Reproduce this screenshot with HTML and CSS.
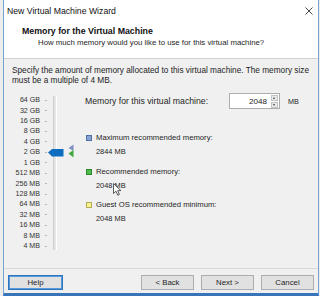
FILE: index.html
```html
<!DOCTYPE html>
<html lang="en">
<head>
    <meta charset="UTF-8">
    <title>New Virtual Machine Wizard</title>
    <link rel="stylesheet" href="styles.css">
</head>
<body>
    <div class="window">
        <!-- 标题栏 -->
        <div class="titlebar">
            <span class="title-text">New Virtual Machine Wizard</span>
            <svg class="close" width="8" height="8" viewBox="0 0 8 8">
                <path d="M0.5 0.5 L7.5 7.5 M7.5 0.5 L0.5 7.5" stroke="#333" stroke-width="0.9" fill="none"/>
            </svg>
        </div>

        <!-- 页眉 -->
        <div class="header">
            <div class="header-title">Memory for the Virtual Machine</div>
            <div class="header-sub">How much memory would you like to use for this virtual machine?</div>
        </div>

        <!-- 主体 -->
        <div class="body">
            <p class="desc">Specify the amount of memory allocated to this virtual machine. The memory size<br>must be a multiple of 4 MB.</p>

            <div class="main">
                <!-- 刻度和滑块 -->
                <div class="scale">
                    <ul class="labels">
                        <li><span>64 GB</span><i></i></li>
                        <li><span>32 GB</span><i></i></li>
                        <li><span>16 GB</span><i></i></li>
                        <li><span>8 GB</span><i></i></li>
                        <li><span>4 GB</span><i></i></li>
                        <li><span>2 GB</span><i></i></li>
                        <li><span>1 GB</span><i></i></li>
                        <li><span>512 MB</span><i></i></li>
                        <li><span>256 MB</span><i></i></li>
                        <li><span>128 MB</span><i></i></li>
                        <li><span>64 MB</span><i></i></li>
                        <li><span>32 MB</span><i></i></li>
                        <li><span>16 MB</span><i></i></li>
                        <li><span>8 MB</span><i></i></li>
                        <li><span>4 MB</span><i></i></li>
                    </ul>
                    <div class="track"></div>
                    <svg class="thumb" width="16" height="8" viewBox="0 0 16 8">
                        <path d="M0 3.5 L4 0 L15.5 0 L15.5 7.5 L4 7.5 Z" fill="#0f6dc0"/>
                    </svg>
                    <svg class="marks" width="7" height="14" viewBox="0 0 7 14">
                        <path d="M0.5 4 L5.5 0.5 L5.5 7 Z" fill="#7f8fbf"/>
                        <path d="M0.5 9.5 L5.5 6 L5.5 13.5 Z" fill="#3fa83c"/>
                    </svg>
                </div>

                <!-- 右侧面板 -->
                <div class="panel">
                    <div class="mem-row">
                        <span class="mem-label">Memory for this virtual machine:</span>
                        <div class="spin">
                            <span class="spin-value">2048</span>
                            <div class="spin-btns">
                                <span class="spin-up"></span>
                                <span class="spin-down"></span>
                            </div>
                        </div>
                        <span class="unit">MB</span>
                    </div>

                    <div class="legend">
                        <div class="legend-item">
                            <div class="legend-label"><span class="swatch swatch-blue"></span>Maximum recommended memory:</div>
                            <div class="legend-value">2844 MB</div>
                        </div>
                        <div class="legend-item">
                            <div class="legend-label"><span class="swatch swatch-green"></span>Recommended memory:</div>
                            <div class="legend-value">2048 MB</div>
                        </div>
                        <div class="legend-item">
                            <div class="legend-label"><span class="swatch swatch-yellow"></span>Guest OS recommended minimum:</div>
                            <div class="legend-value">2048 MB</div>
                        </div>
                    </div>
                </div>
            </div>
        </div>

        <!-- 底部按钮 -->
        <div class="footer">
            <button class="btn btn-help">Help</button>
            <div class="spacer"></div>
            <button class="btn">&lt; Back</button>
            <button class="btn">Next &gt;</button>
            <button class="btn">Cancel</button>
        </div>

        <!-- 鼠标指针 -->
        <svg class="cursor" width="9" height="13" viewBox="0 0 9 13">
            <path d="M0.5 0.5 L0.5 10.5 L3 8.2 L4.8 12.2 L6.4 11.5 L4.7 7.6 L7.9 7.6 Z" fill="#fff" stroke="#333" stroke-width="0.8"/>
        </svg>
    </div>
</body>
</html>
```

FILE: styles.css
```css
/* 全局样式 */
* {
    box-sizing: border-box;
}
body {
    margin: 0;
    width: 320px;
    height: 296px;
    overflow: hidden;
    background: #ececec;
    font-family: "Liberation Sans", Arial, sans-serif;
    font-size: 7.8px;
    color: #1e1e1e;
}

/* 窗口 */
.window {
    position: relative;
    margin-left: 3px;
    width: 316px;
    height: 296px;
    border: 1px solid #7aa2d2;
    border-top: none;
    border-bottom: 3px solid #3a74b8;
    background: #f0f0f0;
    display: flex;
    flex-direction: column;
}

/* 标题栏 */
.titlebar {
    height: 21px;
    background: #fff;
    display: flex;
    align-items: center;
    justify-content: space-between;
    padding: 1px 5px 0 3px;
    color: #111;
    font-size: 8.7px;
}

/* 页眉 */
.header {
    height: 38px;
    background: #fff;
    border-bottom: 1px solid #d2d2d2;
    padding-top: 5px;
}
.header-title {
    font-weight: bold;
    font-size: 8.8px;
    line-height: 11px;
    padding-left: 18px;
    color: #111;
}
.header-sub {
    line-height: 11px;
    padding-left: 34px;
}

/* 主体 */
.body {
    flex: 1;
    padding: 7px 4px 0 8px;
}
.desc {
    margin: 0;
    font-size: 8.25px;
    line-height: 10px;
    white-space: nowrap;
}
.main {
    margin-top: 7px;
    display: flex;
}

/* 刻度 */
.scale {
    position: relative;
    width: 73px;
    display: flex;
}
.labels {
    list-style: none;
    margin: 0;
    padding: 2px 0 0;
    font-size: 7.1px;
    color: #333;
}
.labels li {
    height: 10.43px;
    display: flex;
    align-items: center;
}
.labels span {
    width: 28px;
    text-align: right;
}
.labels i {
    margin-left: 5px;
    width: 2px;
    height: 1px;
    background: #b4b4b4;
}
.track {
    margin: 3px 0 0 6px;
    width: 4px;
    height: 154px;
    border-left: 1px solid #cfcfcf;
    border-right: 1px solid #fff;
    background: #e6e6e6;
}
.thumb {
    position: absolute;
    left: 36px;
    top: 56px;
}
.marks {
    position: absolute;
    left: 56px;
    top: 51px;
}

/* 右侧面板 */
.panel {
    flex: 1;
}
.mem-row {
    height: 16px;
    display: flex;
    align-items: center;
}
.mem-label {
    width: 144px;
    font-size: 8.7px;
}
.spin {
    width: 51px;
    height: 16px;
    background: #fff;
    border: 1px solid #adadad;
    display: flex;
    align-items: center;
    justify-content: flex-end;
    padding-right: 1px;
    font-size: 8.1px;
}
.spin-value {
    margin-right: 4px;
}
.spin-btns {
    width: 7px;
    height: 13px;
    display: flex;
    flex-direction: column;
    gap: 1px;
}
.spin-btns span {
    flex: 1;
    background: #e8e8e8;
    border: 1px solid #c4c4c4;
    position: relative;
}
.spin-up::after,
.spin-down::after {
    content: "";
    position: absolute;
    left: 1px;
    border-left: 1.5px solid transparent;
    border-right: 1.5px solid transparent;
}
.spin-up::after {
    top: 1px;
    border-bottom: 2px solid #444;
}
.spin-down::after {
    top: 1px;
    border-top: 2px solid #444;
}
.unit {
    margin-left: 8px;
    font-size: 7.2px;
}

/* 图例 */
.legend {
    margin-top: 22px;
    display: flex;
    flex-direction: column;
    gap: 6.5px;
    font-size: 7.7px;
}
.legend-label {
    line-height: 14px;
    display: flex;
    align-items: center;
}
.legend-value {
    line-height: 13px;
    padding-left: 11px;
    font-size: 7.4px;
}
.swatch {
    width: 6px;
    height: 6px;
    margin: 0 4px 0 1px;
    border: 1px solid;
}
.swatch-blue {
    background: #86a2d4;
    border-color: #4f6fa6;
}
.swatch-green {
    background: #4dbb49;
    border-color: #2c8a2c;
}
.swatch-yellow {
    background: #f6f28c;
    border-color: #b5ad55;
}

/* 底部按钮 */
.footer {
    height: 25px;
    border-top: 1px solid #d8d8d8;
    padding: 6px 4px 0;
    display: flex;
    align-items: flex-start;
    gap: 7px;
}
.spacer {
    flex: 1;
}
.btn {
    width: 53px;
    height: 15px;
    padding: 0;
    background: #e1e1e1;
    border: 1px solid #adadad;
    font-family: inherit;
    font-size: 7.8px;
    color: #1e1e1e;
}
.btn-help {
    width: 55px;
    border-color: #2a74c0;
    box-shadow: inset 0 0 0 1px #5a9ad8;
}

/* 鼠标指针 */
.cursor {
    position: absolute;
    left: 109px;
    top: 183px;
}
```
